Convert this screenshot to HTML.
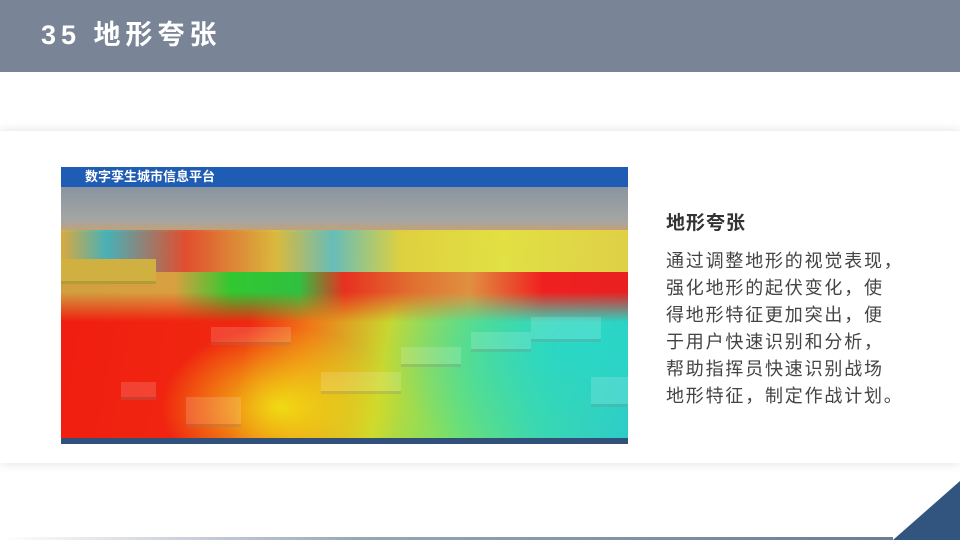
<!DOCTYPE html>
<html><head><meta charset="utf-8"><style>
*{margin:0;padding:0;box-sizing:border-box}
body{width:960px;height:540px;position:relative;overflow:hidden;background:#fff;font-family:"Liberation Sans","Noto Sans CJK SC",sans-serif}
.hdr{position:absolute;left:0;top:0;width:960px;height:72px;background:#798596}
.hdr h1{position:absolute;left:41px;top:17px;color:#fff;font-size:27px;font-weight:bold;letter-spacing:5px;line-height:36px}
.card{position:absolute;left:0;top:131px;width:960px;height:332px;background:#fff;box-shadow:0 0 10px rgba(0,0,0,0.13)}
.img{position:absolute;left:61px;top:167px;width:567px;height:277px;overflow:hidden;
background:
radial-gradient(ellipse 120px 80px at 220px 240px,rgba(240,225,20,0.95),rgba(240,225,20,0) 100%),
radial-gradient(ellipse 200px 120px at 520px 180px,rgba(40,215,200,0.95),rgba(40,215,200,0) 100%),
linear-gradient(100deg,#f01c10 0%,#f02810 35%,#f07818 45%,#c8d830 58%,#70e070 72%,#40d8a8 85%,#30c8c8 100%)}
.sky{position:absolute;left:0;top:20px;width:567px;height:45px;background:linear-gradient(#8a94a0,#a4a6a2 75%,#c8a070)}
.far{position:absolute;left:0;top:63px;width:567px;height:42px;background:linear-gradient(90deg,#d8b040 0%,#40b8c0 8%,#e05030 22%,#d8c040 38%,#60c0c0 48%,#e0d040 60%,#e8e040 78%,#e8d040 100%);opacity:.95}
.mid{position:absolute;left:0;top:105px;width:567px;height:50px;background:linear-gradient(90deg,#d0a040 0%,#d8a040 20%,#30c830 30%,#30c040 42%,#e83020 50%,#e07030 62%,#e09040 72%,#f02020 85%,#e82020 100%);-webkit-mask:linear-gradient(#000 40%,transparent);mask:linear-gradient(#000 40%,transparent)}
.top{position:absolute;left:0;top:0;width:567px;height:20px;background:#1f5cb3}
.top span{position:absolute;left:24px;top:0px;color:#fff;font-size:13px;line-height:20px;font-weight:bold}
.bot{position:absolute;left:0;top:271px;width:567px;height:6px;background:#31507a}
.b{position:absolute;background:rgba(255,255,255,0.15);border-bottom:3px solid rgba(0,0,0,0.12)}
.t1{position:absolute;left:666px;top:208px;font-size:19px;font-weight:bold;color:#333;letter-spacing:1px}
.p{position:absolute;left:666px;top:248px;font-size:18px;line-height:27px;color:#444;letter-spacing:1.8px;white-space:nowrap}
.tri{position:absolute;right:0;bottom:0;width:0;height:0;border-left:67px solid transparent;border-bottom:59px solid #32557f}
.line{position:absolute;left:0;bottom:0;width:893px;height:3px;background:linear-gradient(90deg,#fff,#9aa6b8 40%,#6d7c94)}
</style></head><body>
<div class="hdr"><h1>35 地形夸张</h1></div>
<div class="card"></div>
<div class="img">
<div class="sky"></div>
<div class="far"></div>
<div class="mid"></div>
<div class="b" style="left:0;top:92px;width:95px;height:25px;background:#d0b040"></div>
<div class="b" style="left:60px;top:215px;width:35px;height:18px"></div>
<div class="b" style="left:125px;top:230px;width:55px;height:30px"></div>
<div class="b" style="left:150px;top:160px;width:80px;height:18px"></div>
<div class="b" style="left:260px;top:205px;width:80px;height:22px"></div>
<div class="b" style="left:340px;top:180px;width:60px;height:20px"></div>
<div class="b" style="left:410px;top:165px;width:60px;height:20px"></div>
<div class="b" style="left:470px;top:150px;width:70px;height:25px"></div>
<div class="b" style="left:530px;top:210px;width:37px;height:30px"></div>
<div class="top"><span>数字孪生城市信息平台</span></div>
<div class="bot"></div>
</div>
<div class="t1">地形夸张</div>
<div class="p">通过调整地形的视觉表现，<br>强化地形的起伏变化，使<br>得地形特征更加突出，便<br>于用户快速识别和分析，<br>帮助指挥员快速识别战场<br>地形特征，制定作战计划。</div>
<div class="line"></div>
<div class="tri"></div>
</body></html>
